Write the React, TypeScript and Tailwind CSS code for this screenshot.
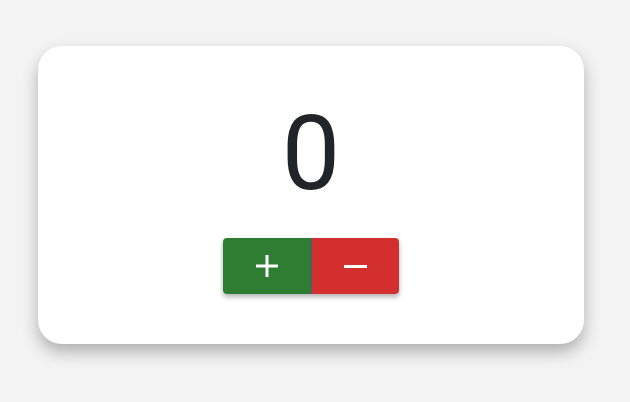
import React, { useState } from "react";

export default function App() {
  const [count, setCount] = useState(0);
  return (
    <div className="w-[630px] h-[402px] bg-[#f3f3f3] overflow-hidden" style={{ fontFamily: "Roboto, 'Liberation Sans', sans-serif" }}>
      <div className="ml-[38px] mt-[46px] w-[546px] h-[298px] bg-white rounded-[24px] shadow-[0_8px_16px_rgba(0,0,0,0.28)] flex flex-col items-center pt-[56px]">
        <div className="text-[104px] leading-none text-[#212529] font-normal">{count}</div>
        <div className="mt-[32px] flex rounded-[4px] overflow-hidden shadow-[0_3px_5px_rgba(0,0,0,0.3)]">
          <button
            aria-label="+"
            onClick={() => setCount(count + 1)}
            className="w-[88px] h-[56px] bg-[#2e7d32] text-white flex items-center justify-center"
          >
            <svg width="22" height="22" viewBox="0 0 22 22" className="block">
              <rect x="9.5" y="0" width="3" height="22" fill="white" />
              <rect x="0" y="9.5" width="22" height="3" fill="white" />
            </svg>
          </button>
          <button
            aria-label="−"
            onClick={() => setCount(count - 1)}
            className="w-[88px] h-[56px] bg-[#d32f2f] border-l border-[#5a4f96] text-white flex items-center justify-center"
          >
            <svg width="23" height="3" viewBox="0 0 23 3" className="block">
              <rect x="0" y="0" width="23" height="3" fill="white" />
            </svg>
          </button>
        </div>
      </div>
    </div>
  );
}
